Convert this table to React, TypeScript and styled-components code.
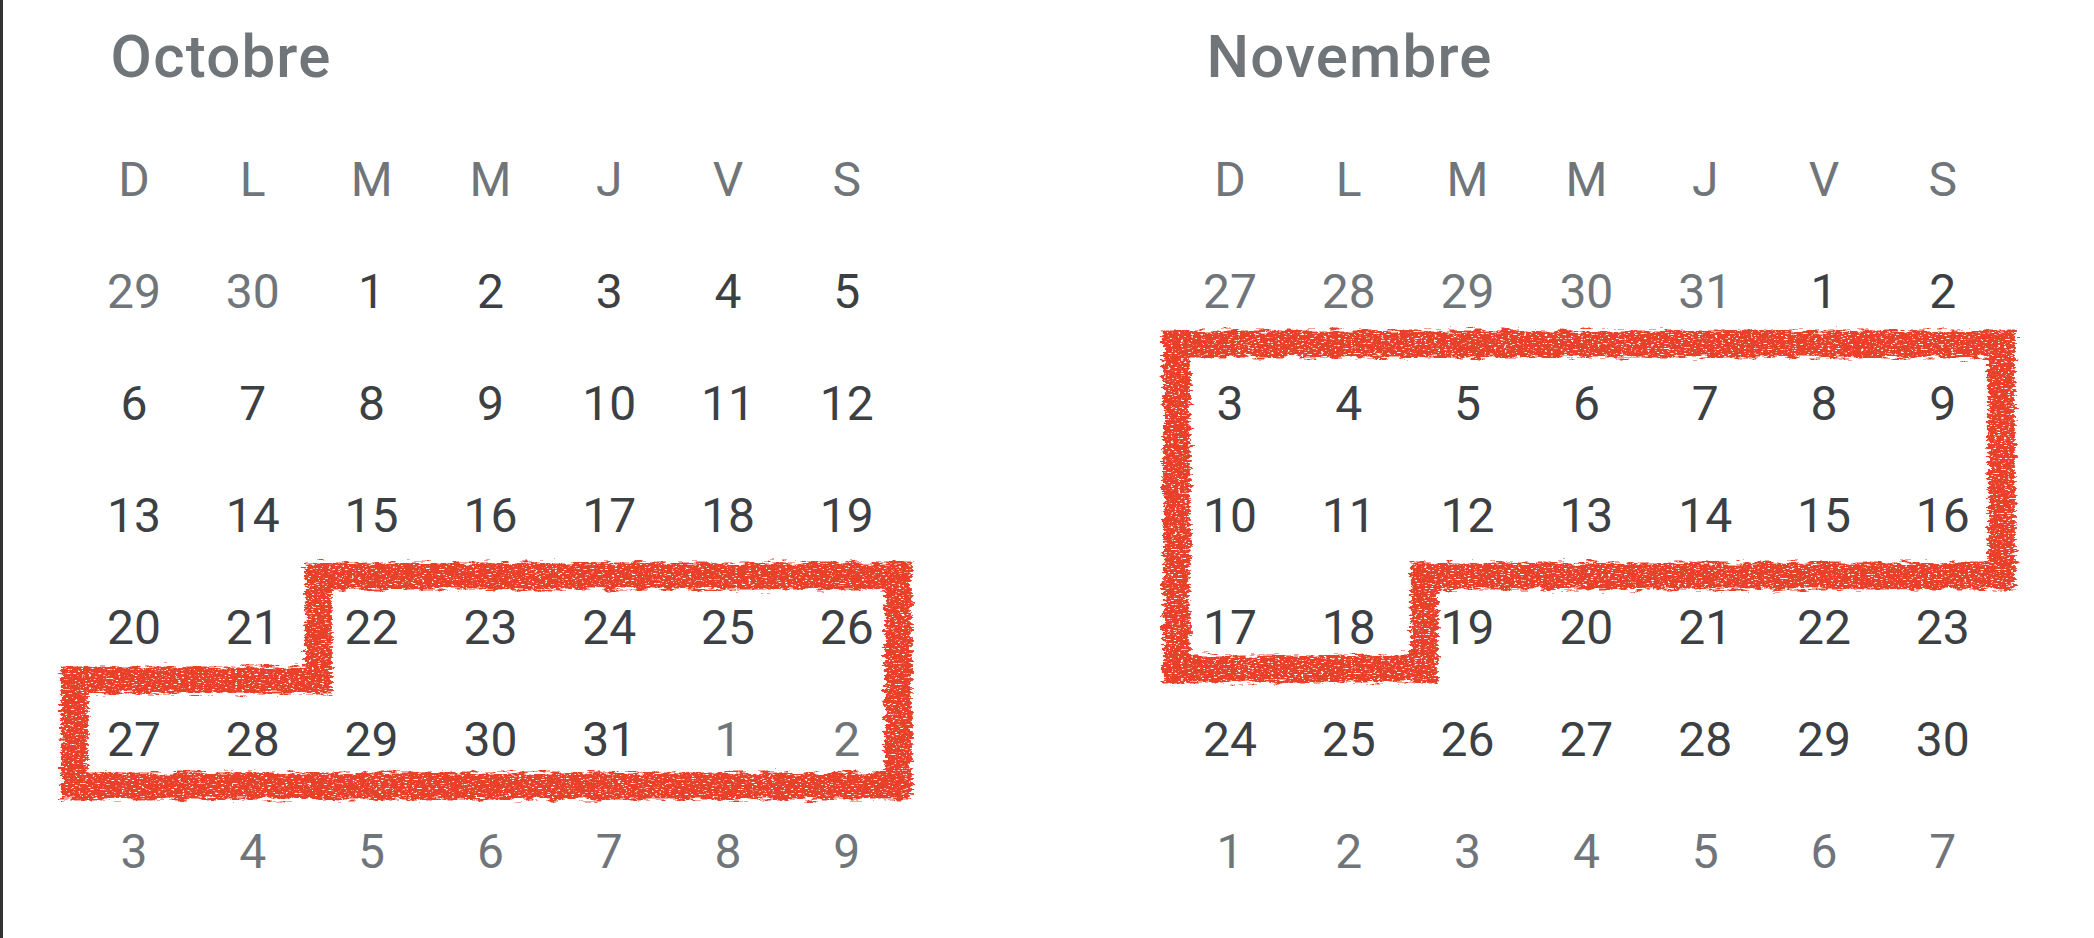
import styled, { createGlobalStyle } from "styled-components";

const GlobalStyle = createGlobalStyle`
  html, body {
    margin: 0;
    background: #ffffff;
  }
  body {
    font-family: Roboto, "Liberation Sans", sans-serif;
  }
`;

const Page = styled.div`
  display: flex;
  gap: 264.4px;
  min-height: 100vh;
  box-sizing: border-box;
  border-left: 3px solid #333333;
  padding: 27px 0 0 71.6px;
`;

const MonthBlock = styled.section`
  position: relative;
  width: 831.6px;
`;

const MonthTitle = styled.h2`
  margin: 0 0 36.5px;
  padding-left: 36px;
  font: 500 60px/60px Roboto, "Liberation Sans", sans-serif;
  letter-spacing: 1.2px;
  color: #70757a;
`;

const DayGrid = styled.div`
  display: grid;
  grid-template-columns: repeat(7, 118.8px);
  grid-auto-rows: 112px;
`;

const Cell = styled.div<{ $muted?: boolean }>`
  display: flex;
  align-items: center;
  justify-content: center;
  font-size: 48px;
  line-height: 48px;
  font-weight: 400;
  color: ${(p) => (p.$muted ? "#70757a" : "#3c4043")};
`;

const Outline = styled.svg`
  position: absolute;
  left: 0;
  top: 0;
  width: 100%;
  height: 100%;
  overflow: visible;
  pointer-events: none;
`;

const WEEKDAYS = ["D", "L", "M", "M", "J", "V", "S"];

type Day = { n: number; muted: boolean };

// 6 weeks of days, padded with the previous and next month
const buildDays = (startCol: number, length: number, prevLength: number): Day[] => {
  const days: Day[] = [];
  for (let i = startCol - 1; i >= 0; i--) days.push({ n: prevLength - i, muted: true });
  for (let d = 1; d <= length; d++) days.push({ n: d, muted: false });
  let next = 1;
  while (days.length < 42) days.push({ n: next++, muted: true });
  return days;
};

type MonthProps = {
  id: string;
  name: string;
  days: Day[];
  outline: [number, number][];
  seed: number;
};

const Month = ({ id, name, days, outline, seed }: MonthProps) => {
  const d = "M" + outline.map(([x, y]) => `${x} ${y}`).join(" L") + " Z";
  return (
    <MonthBlock>
      <MonthTitle>{name}</MonthTitle>
      <DayGrid>
        {WEEKDAYS.map((w, i) => (
          <Cell key={"w" + i} $muted>
            {w}
          </Cell>
        ))}
        {days.map((day, i) => (
          <Cell key={i} $muted={day.muted}>
            {day.n}
          </Cell>
        ))}
      </DayGrid>
      <Outline>
        <defs>
          {/* marker-like rough stroke: wobble the edges, then punch small holes */}
          <filter id={id} x="-10%" y="-20%" width="120%" height="140%">
            <feTurbulence type="fractalNoise" baseFrequency="0.07 0.35" numOctaves="3" seed={seed} result="n" />
            <feDisplacementMap in="SourceGraphic" in2="n" scale="12" xChannelSelector="R" yChannelSelector="G" result="d" />
            <feTurbulence type="fractalNoise" baseFrequency="0.3 0.8" numOctaves="2" seed={seed + 5} result="n2" />
            <feColorMatrix
              in="n2"
              type="matrix"
              values="0 0 0 0 0  0 0 0 0 0  0 0 0 0 0  8 0 0 0 -2.1"
              result="mask"
            />
            <feComposite in="d" in2="mask" operator="in" />
          </filter>
        </defs>
        <path
          d={d}
          fill="none"
          stroke="#e9412a"
          strokeWidth={27}
          strokeLinejoin="miter"
          filter={`url(#${id})`}
        />
      </Outline>
    </MonthBlock>
  );
};

export default function App() {
  return (
    <>
      <GlobalStyle />
      <Page>
        <Month
          id="rough-oct"
          name="Octobre"
          days={buildDays(2, 31, 30)}
          seed={3}
          outline={[
            [243.4, 549],
            [823.4, 549],
            [823.4, 759],
            [-0.6, 759],
            [-0.6, 653],
            [243.4, 653],
          ]}
        />
        <Month
          id="rough-nov"
          name="Novembre"
          days={buildDays(5, 30, 31)}
          seed={11}
          outline={[
            [5.4, 317],
            [830.4, 317],
            [830.4, 549],
            [253.4, 549],
            [253.4, 642],
            [5.4, 642],
          ]}
        />
      </Page>
    </>
  );
}
